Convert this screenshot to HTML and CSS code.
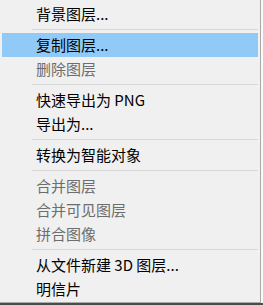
FILE: index.html
```html
<!DOCTYPE html>
<html lang="zh-CN">
<head>
    <meta charset="UTF-8">
    <title>图层菜单</title>
    <link rel="stylesheet" href="styles.css">
</head>
<body>
    <div class="menu">
        <div class="item">背景图层...</div>
        <div class="separator"></div>
        <div class="item active">复制图层...</div>
        <div class="item disabled">删除图层</div>
        <div class="separator"></div>
        <div class="item">快速导出为 PNG</div>
        <div class="item">导出为...</div>
        <div class="separator"></div>
        <div class="item">转换为智能对象</div>
        <div class="separator"></div>
        <div class="item disabled">合并图层</div>
        <div class="item disabled">合并可见图层</div>
        <div class="item disabled">拼合图像</div>
        <div class="separator"></div>
        <div class="item">从文件新建 3D 图层...</div>
        <div class="item">明信片</div>
    </div>
    <div class="footer"></div>
</body>
</html>
```

FILE: styles.css
```css
body {
    margin: 0;
    background-color: #f9f9f9;
    font-family: 'Noto Sans CJK SC', 'Noto Sans', sans-serif;
    font-size: 15px;
    color: #000000;
}
.menu {
    width: 261px;
    box-sizing: border-box;
    padding: 2px 2px 1px 2px;
    background-color: #f0f0f0;
    border-right: 1px solid #a9a9a9;
    border-bottom: 1px solid #a9a9a9;
}
.item {
    height: 24px;
    line-height: 24px;
    padding-left: 34px;
    white-space: nowrap;
}
.active {
    background-color: #91c9f7;
}
.disabled {
    color: #6d6d6d;
}
.separator {
    height: 1px;
    margin: 3px 0 3px 30px;
    background-color: #d7d7d7;
}
.footer {
    height: 3px;
    background-color: #4b4b4b;
}
```
